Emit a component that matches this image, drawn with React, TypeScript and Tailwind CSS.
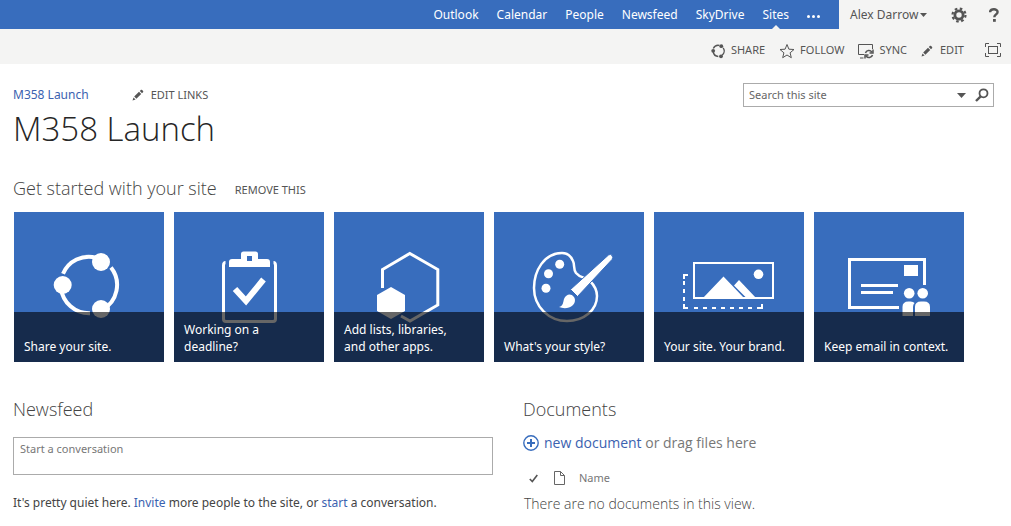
import React from "react";

interface Tile {
  label: string;
  icon: React.ReactNode;
}

const navLinks = ["Outlook", "Calendar", "People", "Newsfeed", "SkyDrive"];

const PencilIcon: React.FC = () => (
  <svg className="h-3 w-3" viewBox="0 0 12 12" fill="#555">
    <path d="M0.5 11.5l1-3.100 2.100 2.100zM2.200 7.600l4.800-4.800 2.200 2.200-4.800 4.800zM7.800 2l1.200-1.200c.8-.7 2.900 1.300 2.200 2.200L10 4.200z" />
  </svg>
);

const ShareIcon: React.FC = () => (
  <svg className="h-4 w-[15px]" viewBox="0 0 15 16">
    <path
      d="M2.300 5.500A5.600 5.600 0 0 1 8.500 2.500M12.200 4.800A5.600 5.600 0 0 1 11 12.300M7.300 13.500A5.600 5.600 0 0 1 2.200 9"
      fill="none"
      stroke="#555"
      strokeWidth="1.400"
    />
    <circle cx="2.200" cy="7.800" r="1.900" fill="#555" />
    <circle cx="10.300" cy="3.200" r="1.900" fill="#555" />
    <circle cx="10" cy="13.300" r="1.900" fill="#555" />
  </svg>
);

const StarIcon: React.FC = () => (
  <svg className="h-4 w-4" viewBox="0 0 16 16" fill="none" stroke="#555">
    <path d="M8 1.500l1.900 4.700 5.100.3-3.900 3.300 1.200 4.900L8 12l-4.300 2.700 1.200-4.900L1 6.500l5.100-.3z" />
  </svg>
);

const SyncIcon: React.FC = () => (
  <svg className="h-4 w-4" viewBox="0 0 16 16" fill="none" stroke="#555">
    <path d="M6 11.500H.5v-10h14V6M2 15h3.500" />
    <path d="M7.500 10c.8-3 4.800-3.400 6.300-1M15 6.500v3.500h-3.500M14.500 12c-.8 3-4.800 3.400-6.300 1M7 15.500V12h3.500" strokeWidth="1.500" />
  </svg>
);

const FocusIcon: React.FC = () => (
  <svg className="h-4 w-4" viewBox="0 0 16 16" fill="none" stroke="#555">
    <path d="M.5 4V.5H4M12 .5h3.500V4M15.500 10v3.500H12M4 13.500H.5V10" />
    <rect x="3.500" y="3.500" width="9" height="7" />
  </svg>
);

const GearIcon: React.FC = () => (
  <svg className="h-4 w-4" viewBox="0 0 16 16" fill="none" stroke="#555">
    <circle cx="8" cy="8" r="4.100" strokeWidth="2.800" />
    <circle cx="8" cy="8" r="6.500" strokeWidth="2.200" strokeDasharray="2.600 2.505" />
  </svg>
);

const HelpIcon: React.FC = () => (
  <svg className="h-[14px] w-[10px]" viewBox="0 0 10 14">
    <path d="M1 4.200C1.200 .4 8.600.3 8.600 4c0 2.400-3.300 2.500-3.300 5.300" fill="none" stroke="#555" strokeWidth="2.400" />
    <rect x="4" y="11" width="2.800" height="2.800" fill="#555" />
  </svg>
);

const Caret: React.FC<{ className: string }> = ({ className }) => (
  <svg className={className} viewBox="0 0 9 5" fill="#555">
    <path d="M0 0h9L4.500 5z" />
  </svg>
);

const tiles: Tile[] = [
  {
    label: "Share your site.",
    icon: (
      <>
        <path
          d="M49 61.700A28.300 28.300 0 0 1 82 45.600M97 55.500A28.300 28.300 0 0 1 88 98M76 101.300A28.300 28.300 0 0 1 47 76"
          fill="none"
          stroke="#fff"
          strokeWidth="4"
        />
        <circle cx="48.700" cy="73" r="9" fill="#fff" />
        <circle cx="87" cy="50" r="9" fill="#fff" />
        <circle cx="87" cy="97" r="9" fill="#fff" />
      </>
    ),
  },
  {
    label: "Working on a deadline?",
    icon: (
      <>
        <path d="M51.500 50.500q-2 0-2 3V107q0 2.500 2.500 2.500h47q2.500 0 2.500-2.500V53.500q0-3-2-3" fill="none" stroke="#fff" strokeWidth="3" />
        <path d="M52 48h47v8H52z" fill="#386dbd" />
        <path
          d="M55 55v-5q0-3 3-3h9v-5q0-2.500 2.500-2.500h12q2.500 0 2.500 2.500v5h9q3 0 3 3v5zM73 44v5h5v-5z"
          fill="#fff"
          fillRule="evenodd"
        />
        <path d="M61 77l11 12 17.500-21.500" fill="none" stroke="#fff" strokeWidth="6" />
      </>
    ),
  },
  {
    label: "Add lists, libraries, and other apps.",
    icon: (
      <>
        <path d="M48.500 76V57.500l27.300-16 28 16V93L76 109l-9-5" fill="none" stroke="#fff" strokeWidth="3" />
        <path d="M57 75l14 8v16l-14 8-14-8V83z" fill="#fff" />
      </>
    ),
  },
  {
    label: "What's your style?",
    icon: (
      <>
        <path
          d="M68 41C50 41 40 59 40 76c0 19 15 33 33 33 17 0 30-11 30-25 0-6-3-11-7-15-5-4-10-3-14-8-3-4-1-8-3-12-2-5-6-8-11-8z"
          fill="none"
          stroke="#fff"
          strokeWidth="2.500"
        />
        <circle cx="65.700" cy="52.300" r="4.500" fill="#fff" />
        <circle cx="54.500" cy="61.700" r="4.500" fill="#fff" />
        <circle cx="52" cy="76.300" r="4.500" fill="#fff" />
        <path d="M114.500 43q2-1.500 3.500.5t0 4L83.500 84.500l-7-7z" fill="#fff" stroke="#386dbd" strokeWidth="1" />
        <path d="M65 95c4.500-1 4-5 5-8 2-5 7-6 10-2 2.500 4 0 9-5 10.500-3 1-7 .8-10-.5z" fill="#fff" />
      </>
    ),
  },
  {
    label: "Your site. Your brand.",
    icon: (
      <>
        <rect x="40" y="51" width="79" height="35" fill="none" stroke="#fff" strokeWidth="2" />
        <path d="M49 86l20.500-21.500L90 86zM80 73.500l5-5.500 17 18h-9.500z" fill="#fff" />
        <circle cx="104.500" cy="62.300" r="4.800" fill="#fff" />
        <path d="M34 63h-4v4M30 69v4M30 77v4M30 85v4M30 92v4h4M40 96h4M49 96h4M58 96h4M67 96h4M76 96h4M85 96h4M94 96h4M103 96h5v-4" fill="none" stroke="#fff" strokeWidth="2" />
      </>
    ),
  },
  {
    label: "Keep email in context.",
    icon: (
      <>
        <path d="M110.500 73V47.500h-75v48H85" fill="none" stroke="#fff" strokeWidth="3" />
        <rect x="90" y="53" width="14" height="11" fill="#fff" />
        <path d="M47 73.500h37M47 80.500h32" stroke="#fff" strokeWidth="3" />
        <circle cx="95.200" cy="81.300" r="5.300" fill="#fff" />
        <circle cx="108.700" cy="81.300" r="5.300" fill="#fff" />
        <path d="M88.500 104V95q0-5.500 6-5.500h2q3 0 4 1.500-1.500 1.500-1.500 4v9zM101 104V95q0-5.500 6-5.500h3q6 0 6 5.500v9z" fill="#fff" />
      </>
    ),
  },
];

const TopBar: React.FC = () => (
  <header className="flex h-[29px] bg-[#f4f4f3] text-[12px] leading-4">
    <nav className="flex flex-1 justify-end gap-[18px] bg-[#386dbd] pr-[19px] text-white">
      {navLinks.map((link) => (
        <a key={link} href="#" className="flex items-center">
          {link}
        </a>
      ))}
      <a href="#" className="relative flex items-center">
        Sites
        <span className="absolute bottom-0 left-1/2 -ml-1 border-x-4 border-b-4 border-x-transparent border-b-[#f4f4f3]" />
      </a>
      <button type="button" aria-label="More" className="flex items-center gap-[2px] pt-1">
        <span className="h-[3px] w-[3px] rounded-full bg-white" />
        <span className="h-[3px] w-[3px] rounded-full bg-white" />
        <span className="h-[3px] w-[3px] rounded-full bg-white" />
      </button>
    </nav>
    <div className="flex w-[172px] items-center justify-between pr-3 pl-[11px] text-[#555]">
      <button type="button" className="flex items-center gap-[2px]">
        Alex Darrow
        <Caret className="h-1 w-[7px]" />
      </button>
      <div className="flex items-center gap-[22px]">
        <button type="button" aria-label="Settings">
          <GearIcon />
        </button>
        <button type="button" aria-label="Help">
          <HelpIcon />
        </button>
      </div>
    </div>
  </header>
);

const ActionBar: React.FC = () => (
  <div className="flex h-[35px] items-center justify-end gap-[14px] bg-[#f4f4f3] pt-2 pr-[10px] text-[11px] text-[#555]">
    <button type="button" className="flex items-center gap-[5px]">
      <ShareIcon />
      SHARE
    </button>
    <button type="button" className="flex items-center gap-[5px]">
      <StarIcon />
      FOLLOW
    </button>
    <button type="button" className="flex items-center gap-[5px]">
      <SyncIcon />
      SYNC
    </button>
    <button type="button" className="flex items-center gap-[7px]">
      <PencilIcon />
      EDIT
    </button>
    <button type="button" aria-label="Focus on content" className="ml-[7px]">
      <FocusIcon />
    </button>
  </div>
);

const App: React.FC = () => {
  return (
    <div className="bg-white font-['Noto_Sans','Open_Sans',sans-serif] text-[#444]">
      <TopBar />
      <ActionBar />

      <main className="pr-2 pl-[13px]">
        <div className="flex items-start justify-between pt-[19px] pr-[9px]">
          <div>
            <div className="flex h-6 items-center gap-[43px] text-[12px]">
              <a href="#" className="text-[#3b62b0]">
                M358 Launch
              </a>
              <button type="button" className="flex items-center gap-[7px] text-[11px] text-[#555]">
                <PencilIcon />
                EDIT LINKS
              </button>
            </div>
            <h1 className="font-['Open_Sans',sans-serif] text-[33px] leading-[44px] font-light text-[#262626]">M358 Launch</h1>
          </div>
          <form className="flex h-6 w-[251px] items-center border border-[#ababab] pr-1 pl-[5px]">
            <input
              type="text"
              aria-label="Search this site"
              placeholder="Search this site"
              className="min-w-0 flex-1 text-[11px] outline-none placeholder:text-[#666]"
            />
            <button type="button" aria-label="Search scope">
              <Caret className="h-[5px] w-[9px]" />
            </button>
            <button type="submit" aria-label="Search" className="ml-[9px]">
              <svg className="h-[14px] w-[14px]" viewBox="0 0 14 14" fill="none" stroke="#555">
                <circle cx="8.500" cy="5.300" r="4" strokeWidth="1.800" />
                <path d="M5.700 8.300L1 13" strokeWidth="2.400" />
              </svg>
            </button>
          </form>
        </div>

        <section className="pt-[21px]">
          <div className="flex h-8 items-center gap-[18px]">
            <h2 className="font-['Open_Sans',sans-serif] text-[18px] font-light">Get started with your site</h2>
            <button type="button" className="pt-1 text-[11px] text-[#555]">
              REMOVE THIS
            </button>
          </div>
          <div className="flex flex-wrap gap-[10px] pt-2 pl-px">
            {tiles.map((tile) => (
              <a key={tile.label} href="#" className="relative h-[150px] w-[150px] bg-[#386dbd]">
                <svg className="h-full w-full" viewBox="0 0 150 150">
                  {tile.icon}
                </svg>
                <span className="absolute inset-x-0 bottom-0 flex h-[50px] items-end bg-black/60 pr-[14px] pb-[7px] pl-[10px] text-[12px] leading-[17px] text-white">
                  {tile.label}
                </span>
              </a>
            ))}
          </div>
        </section>

        <div className="grid grid-cols-2 gap-[30px] pt-[33px]">
          <section>
            <h2 className="font-['Open_Sans',sans-serif] text-[18px] leading-7 font-light">Newsfeed</h2>
            <textarea
              aria-label="Start a conversation"
              placeholder="Start a conversation"
              className="mt-[14px] block h-[38px] w-full resize-none border border-[#ababab] px-[6px] py-[3px] text-[11px] leading-4 outline-none placeholder:text-[#777]"
            />
            <p className="pt-[18px] text-[12px] leading-5">
              It's pretty quiet here.{" "}
              <a href="#" className="text-[#3b62b0]">
                Invite
              </a>{" "}
              more people to the site, or{" "}
              <a href="#" className="text-[#3b62b0]">
                start
              </a>{" "}
              a conversation.
            </p>
          </section>

          <section>
            <h2 className="font-['Open_Sans',sans-serif] text-[18px] leading-7 font-light">Documents</h2>
            <p className="flex items-center gap-[5px] pt-[10px] font-['Open_Sans',sans-serif] text-[14px] leading-5 text-[#777]">
              <svg className="h-4 w-4" viewBox="0 0 16 16" fill="none" stroke="#386dbd">
                <circle cx="8" cy="8" r="7.200" strokeWidth="1.400" />
                <path d="M8 4v8M4 8h8" strokeWidth="2" />
              </svg>
              <span>
                <a href="#" className="text-[#3b62b0]">
                  new document
                </a>{" "}
                or drag files here
              </span>
            </p>
            <table className="mt-[13px] text-left text-[11px] text-[#777]">
              <thead>
                <tr className="h-6">
                  <th className="w-[31px] pl-[6px]">
                    <svg className="h-[9px] w-[9px]" viewBox="0 0 9 9" fill="none" stroke="#555" strokeWidth="1.600" role="img" aria-label="Select">
                      <path d="M.8 5l2.500 2.500L8.300 1" />
                    </svg>
                  </th>
                  <th className="w-[25px]">
                    <svg className="h-[14px] w-[11px]" viewBox="0 0 11 14" fill="none" stroke="#666" role="img" aria-label="Type">
                      <path d="M.5.500h6l4 4v9H.500zM6.500.500v4h4" />
                    </svg>
                  </th>
                  <th className="font-normal">Name</th>
                </tr>
              </thead>
            </table>
            <p className="pt-1 pl-px font-['Open_Sans',sans-serif] text-[14px] leading-5 font-light text-[#444]">
              There are no documents in this view.
            </p>
          </section>
        </div>
      </main>
    </div>
  );
};

export default App;
